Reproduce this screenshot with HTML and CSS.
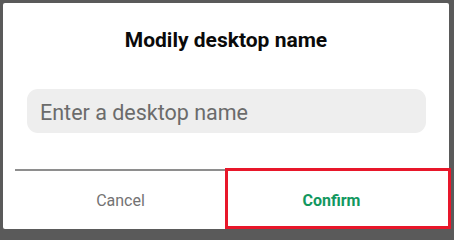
FILE: index.html
```html
<!DOCTYPE html>
<html>
<head>
<meta charset="utf-8">
<link rel="stylesheet" href="styles.css">
</head>
<body>
<div class="dialog">
  <h1 class="title">Modily desktop name</h1>
  <div class="field"><input class="input" type="text" placeholder="Enter a desktop name"></div>
  <div class="footer">
    <button class="btn cancel">Cancel</button>
    <button class="btn confirm">Confirm</button>
  </div>
</div>
</body>
</html>
```
FILE: styles.css
```css
html, body {
  margin: 0;
  padding: 0;
}
body {
  width: 454px;
  height: 232px;
  background: #5a5a5a;
  padding: 3px 5px 3px 3px;
  box-sizing: border-box;
  font-family: Roboto, "Liberation Sans", sans-serif;
  overflow: hidden;
}
.dialog {
  width: 446px;
  height: 226px;
  background: #fff;
  border-radius: 2px;
  display: flex;
  flex-direction: column;
  box-sizing: border-box;
  padding-top: 25px;
}
.title {
  margin: 0;
  font-size: 21px;
  line-height: 24px;
  font-weight: 700;
  color: #0a0a0a;
  text-align: center;
}
.field {
  margin: 37px 23px 0 24px;
}
.input {
  display: block;
  width: 100%;
  height: 44px;
  box-sizing: border-box;
  border: none;
  outline: none;
  border-radius: 11px;
  background: #eeeeee;
  padding: 2px 13px 0 13px;
  font-family: Roboto, "Liberation Sans", sans-serif;
  font-size: 21.5px;
  color: #333;
}
.input::placeholder {
  color: #6b6b6b;
}
.footer {
  margin: 36px 12px 0 12px;
  border-top: 2px solid #8e8e8e;
  display: flex;
  flex: 1;
}
.btn {
  flex: 1;
  border: none;
  background: transparent;
  font-family: Roboto, "Liberation Sans", sans-serif;
  font-size: 16px;
  padding: 0;
  position: relative;
}
.cancel {
  color: #737373;
}
.confirm {
  color: #12985f;
  font-weight: 700;
}
.confirm::after {
  content: "";
  position: absolute;
  left: -1px;
  top: -3px;
  right: -14px;
  bottom: 0;
  border: 3px solid #e8172a;
}
```
